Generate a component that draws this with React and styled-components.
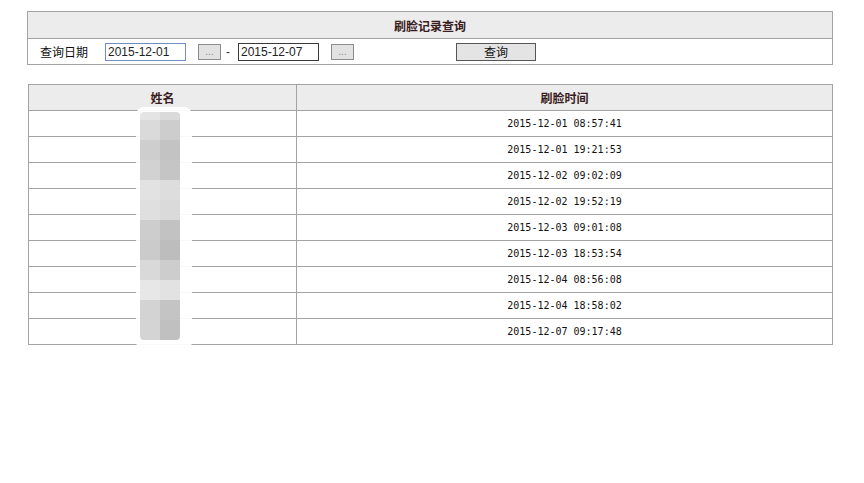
import React from "react";
import styled, { createGlobalStyle } from "styled-components";

const GlobalStyle = createGlobalStyle`
  html, body { margin: 0; padding: 0; background: #ffffff; }
  body { font-family: "Noto Sans CJK SC", "Liberation Sans", sans-serif; font-size: 12px; color: #000; }
`;

const Page = styled.div`
  position: relative;
  padding: 11px 0 0 27px;
  width: 864px;
  height: 483px;
  box-sizing: border-box;
`;

const SearchBox = styled.div`
  width: 806px;
  box-sizing: border-box;
  border: 1px solid #a3a3a3;
`;

const SearchTitle = styled.div`
  height: 26px;
  background: #ececec;
  border-bottom: 1px solid #a3a3a3;
  display: flex;
  align-items: center;
  justify-content: center;
  font-weight: bold;
  font-size: 12px;
  color: #3a1c22;
`;

const SearchRow = styled.div`
  height: 25px;
  display: flex;
  align-items: center;
  padding-left: 12px;
`;

const Label = styled.span`
  font-size: 12px;
  line-height: 14px;
  color: #111;
  width: 48px;
  white-space: nowrap;
`;

const DateInput = styled.input`
  box-sizing: border-box;
  width: 81px;
  height: 18px;
  margin: 0 0 0 ${(p) => p.$ml}px;
  padding: 0 2px;
  border: 1px solid ${(p) => (p.$focused ? "#6f8fc4" : "#3a3a3a")};
  font-family: "Liberation Sans", Arial, sans-serif;
  font-size: 12px;
  color: #222;
  background: #fff;
  outline: none;
`;

const DotsButton = styled.button`
  box-sizing: border-box;
  width: 23px;
  height: 16px;
  margin-left: 12px;
  padding: 0;
  border: 1px solid #8c8c8c;
  background: #e2e2e2;
  color: #8a8a8a;
  font-family: "Liberation Sans", Arial, sans-serif;
  font-size: 10px;
  line-height: 10px;
`;

const Dash = styled.span`
  margin-left: 5px;
  width: 12px;
  font-family: "Liberation Sans", Arial, sans-serif;
  font-size: 12px;
  color: #333;
`;

const QueryButton = styled.button`
  box-sizing: border-box;
  width: 80px;
  height: 18px;
  margin-left: 102px;
  padding: 0;
  border: 1px solid #555;
  background: #e4e4e4;
  font-family: "Noto Sans CJK SC", sans-serif;
  font-size: 12px;
  line-height: 14px;
  color: #111;
`;

const Table = styled.table`
  margin: 19px 0 0 1px;
  width: 805px;
  border-collapse: collapse;
  table-layout: fixed;
`;

const Th = styled.th`
  height: 25px;
  padding: 0;
  border: 1px solid #a3a3a3;
  background: #ececec;
  font-weight: bold;
  font-size: 12px;
  color: #3a1c22;
  width: ${(p) => p.$w || "auto"};
`;

const Td = styled.td`
  height: 25px;
  padding: 0;
  border: 1px solid #a3a3a3;
  text-align: center;
  font-family: "DejaVu Sans Mono", monospace;
  font-size: 10px;
  color: #111;
`;

const Mosaic = styled.div`
  position: absolute;
  left: 136px;
  top: 107px;
  width: 56px;
  height: 243px;
  border-radius: 8px;
  background: rgba(255, 255, 255, 0.92);
  padding: 5px 0 0 4px;
  box-sizing: border-box;
`;

const MosaicGrid = styled.div`
  display: grid;
  grid-template-columns: 20px 20px;
  grid-template-rows: 8px repeat(11, 20px);
  border-radius: 4px;
  overflow: hidden;
  width: 40px;
`;

const Tile = styled.div`
  background: ${(p) => p.$c};
`;

const times = [
  "2015-12-01 08:57:41",
  "2015-12-01 19:21:53",
  "2015-12-02 09:02:09",
  "2015-12-02 19:52:19",
  "2015-12-03 09:01:08",
  "2015-12-03 18:53:54",
  "2015-12-04 08:56:08",
  "2015-12-04 18:58:02",
  "2015-12-07 09:17:48",
];

const tiles = [
  ["#e4e4e4", "#dadada"],
  ["#dadada", "#cdcdcd"],
  ["#cecece", "#c3c3c3"],
  ["#d2d2d2", "#c5c5c5"],
  ["#e2e2e2", "#dddddd"],
  ["#dfdfdf", "#dadada"],
  ["#cdcdcd", "#c2c2c2"],
  ["#cbcbcb", "#bdbdbd"],
  ["#d9d9d9", "#cdcdcd"],
  ["#e7e7e7", "#e2e2e2"],
  ["#d3d3d3", "#c4c4c4"],
  ["#d4d4d4", "#c0c0c0"],
];

export default function App() {
  return (
    <Page>
      <GlobalStyle />
      <SearchBox>
        <SearchTitle>刷脸记录查询</SearchTitle>
        <SearchRow>
          <Label>查询日期</Label>
          <DateInput $ml={17} $focused readOnly value="2015-12-01" />
          <DotsButton>...</DotsButton>
          <Dash>-</Dash>
          <DateInput $ml={0} readOnly value="2015-12-07" />
          <DotsButton>...</DotsButton>
          <QueryButton>查询</QueryButton>
        </SearchRow>
      </SearchBox>
      <Table>
        <thead>
          <tr>
            <Th $w="267px">姓名</Th>
            <Th>刷脸时间</Th>
          </tr>
        </thead>
        <tbody>
          {times.map((t) => (
            <tr key={t}>
              <Td></Td>
              <Td>{t}</Td>
            </tr>
          ))}
        </tbody>
      </Table>
      <Mosaic>
        <MosaicGrid>
          {tiles.flatMap((row, i) =>
            row.map((c, j) => <Tile key={`${i}-${j}`} $c={c} />)
          )}
        </MosaicGrid>
      </Mosaic>
    </Page>
  );
}
